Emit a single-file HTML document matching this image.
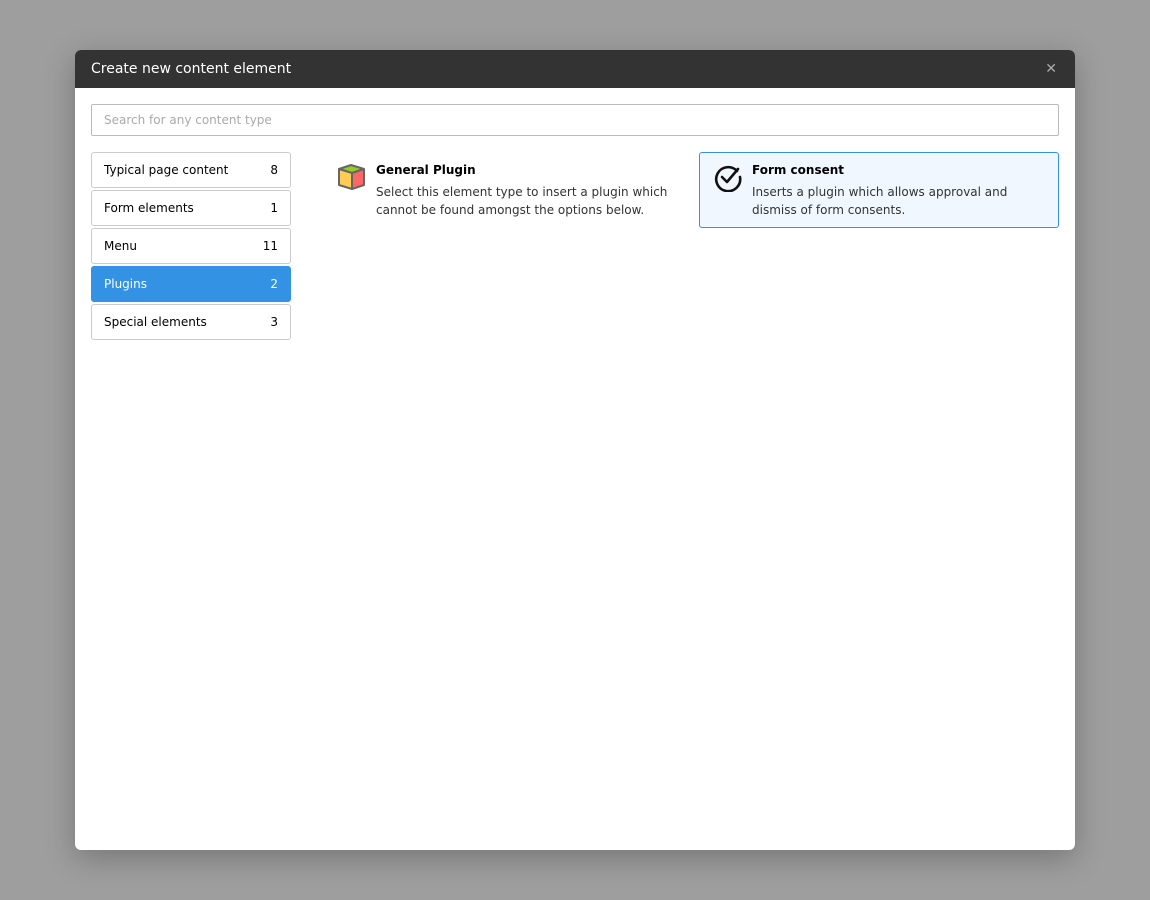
<!DOCTYPE html>
<html><head><style>
body{margin:0;width:1150px;height:900px;background:#9e9e9e;font-family:"DejaVu Sans","Liberation Sans",sans-serif;position:relative;overflow:hidden}
.modal{position:absolute;left:75px;top:50px;width:1000px;height:800px;background:#fff;border-radius:6px;overflow:hidden;box-shadow:0 8px 30px rgba(0,0,0,.25)}
.hd{height:38px;background:#333;color:#fff;font-size:14px;line-height:38px;padding-left:16px;position:relative}
.hd .x{position:absolute;right:18px;top:0;color:#aaa;font-size:14px}
.search{position:absolute;left:16px;top:54px;height:32px;border:1px solid #bbb;border-radius:2px;font-size:12px;color:#aaa;line-height:30px;padding-left:12px;box-sizing:border-box;width:968px}
.nav{position:absolute;left:16px;top:102px;width:200px}
.nav div{border:1px solid #ccc;border-radius:3px;font-size:12px;line-height:34px;padding:0 12px;display:flex;justify-content:space-between;color:#000;box-sizing:border-box;height:36px;margin-bottom:2px}
.nav div.act{background:#3392e4;border-color:#3392e4;color:#fff}
.item{position:absolute;font-size:12px;color:#333;line-height:18px}
.item b{color:#000;display:block;margin-bottom:4px;font-size:12px}
</style></head><body>
<div class="modal">
<div class="hd">Create new content element<span class="x">✕</span></div>
<div class="search">Search for any content type</div>
<div class="nav">
<div><span>Typical page content</span><span>8</span></div>
<div><span>Form elements</span><span>1</span></div>
<div><span>Menu</span><span>11</span></div>
<div class="act"><span>Plugins</span><span>2</span></div>
<div><span>Special elements</span><span>3</span></div>
</div>
<svg style="position:absolute;left:262px;top:113px" width="30" height="28" viewBox="0 0 30 28">
<polygon points="2,6 14,2 27,6 15,10" fill="#9c2" stroke="#666" stroke-width="2" stroke-linejoin="round"/>
<polygon points="2,6 15,10 15,26 2,22" fill="#fc5" stroke="#666" stroke-width="2" stroke-linejoin="round"/>
<polygon points="15,10 27,6 27,22 15,26" fill="#f66" stroke="#666" stroke-width="2" stroke-linejoin="round"/>
</svg>
<div class="item" style="left:301px;top:111px"><b>General Plugin</b>Select this element type to insert a plugin which<br>cannot be found amongst the options below.</div>
<div style="position:absolute;left:624px;top:102px;width:358px;height:74px;border:1px solid #3392e4;border-radius:3px;background:#f1f7fe"></div>
<svg style="position:absolute;left:638px;top:112px" width="30" height="30" viewBox="0 0 30 30">
<path d="M24 9A12 12 0 1 0 27 15" fill="none" stroke="#111" stroke-width="2.6" stroke-linecap="round"/>
<path d="M9 15l5 5 11-13" fill="none" stroke="#111" stroke-width="2.6" stroke-linecap="round" stroke-linejoin="round"/>
</svg>
<div class="item" style="left:677px;top:111px"><b>Form consent</b>Inserts a plugin which allows approval and<br>dismiss of form consents.</div>
</div>
</body></html>
